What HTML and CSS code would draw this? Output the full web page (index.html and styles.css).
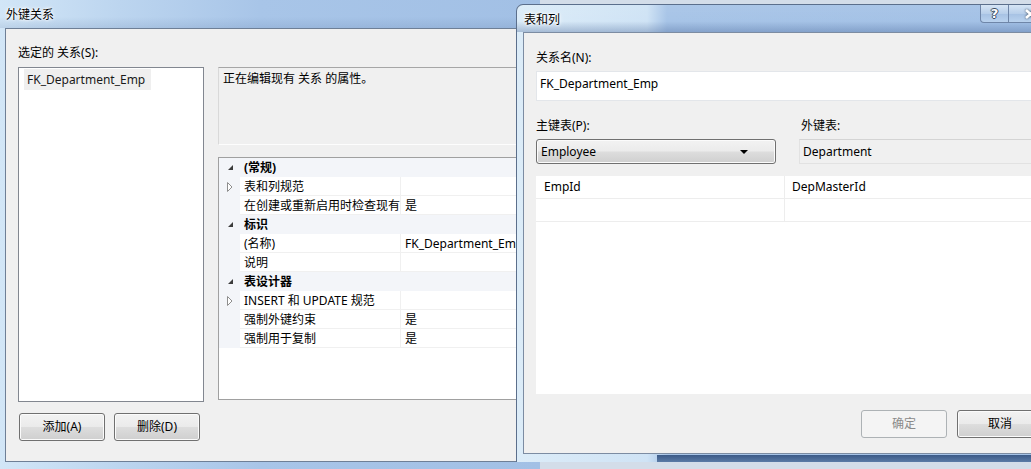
FILE: index.html
```html
<!DOCTYPE html>
<html lang="zh-CN">
<head>
<meta charset="utf-8">
<title>外键关系</title>
<link rel="stylesheet" href="styles.css">
</head>
<body>
<div class="desktop">
  <section class="win win-main">
    <div class="titlebar"><span class="title">外键关系</span></div>
    <div class="client main-client">
      <div class="col-left">
        <div class="label">选定的 关系(S):</div>
        <div class="listbox"><span class="list-item">FK_Department_Emp</span></div>
        <div class="btn-row">
          <button class="btn">添加(A)</button>
          <button class="btn">删除(D)</button>
        </div>
      </div>
      <div class="col-right">
        <div class="desc">正在编辑现有 关系 的属性。</div>
        <div class="propgrid">
          <div class="prow cat"><span class="gut"><svg class="tri-open" width="5" height="5" viewBox="0 0 5 5"><polygon points="5,0 5,5 0,5"/></svg></span><span class="pname">(常规)</span></div>
          <div class="prow"><span class="gut"><svg class="tri-closed" width="6" height="10" viewBox="0 0 6 10"><polygon points="0.5,0.5 5,5 0.5,9.5"/></svg></span><span class="pname">表和列规范</span><span class="pval"></span></div>
          <div class="prow"><span class="gut"></span><span class="pname">在创建或重新启用时检查现有</span><span class="pval">是</span></div>
          <div class="prow cat"><span class="gut"><svg class="tri-open" width="5" height="5" viewBox="0 0 5 5"><polygon points="5,0 5,5 0,5"/></svg></span><span class="pname">标识</span></div>
          <div class="prow"><span class="gut"></span><span class="pname">(名称)</span><span class="pval">FK_Department_Emp</span></div>
          <div class="prow"><span class="gut"></span><span class="pname">说明</span><span class="pval"></span></div>
          <div class="prow cat"><span class="gut"><svg class="tri-open" width="5" height="5" viewBox="0 0 5 5"><polygon points="5,0 5,5 0,5"/></svg></span><span class="pname">表设计器</span></div>
          <div class="prow"><span class="gut"><svg class="tri-closed" width="6" height="10" viewBox="0 0 6 10"><polygon points="0.5,0.5 5,5 0.5,9.5"/></svg></span><span class="pname">INSERT 和 UPDATE 规范</span><span class="pval"></span></div>
          <div class="prow"><span class="gut"></span><span class="pname">强制外键约束</span><span class="pval">是</span></div>
          <div class="prow"><span class="gut"></span><span class="pname">强制用于复制</span><span class="pval">是</span></div>
        </div>
      </div>
    </div>
  </section>

  <section class="win win-cols">
    <div class="titlebar">
      <span class="title">表和列</span>
      <div class="caption-btns">
        <span class="cap-btn cap-help">?</span>
        <span class="cap-btn cap-close"><svg width="11" height="10" viewBox="0 0 11 10"><path d="M1 1 L10 9 M10 1 L1 9"/></svg></span>
      </div>
    </div>
    <div class="client cols-client">
      <div class="label">关系名(N):</div>
      <div class="textbox">FK_Department_Emp</div>
      <div class="tables">
        <div class="tcol tcol-pk">
          <div class="label">主键表(P):</div>
          <div class="combo"><span>Employee</span><svg class="combo-arrow" width="8" height="4" viewBox="0 0 8 4"><polygon points="0,0 8,0 4,4"/></svg></div>
        </div>
        <div class="tcol tcol-fk">
          <div class="label label-fk">外键表:</div>
          <div class="readonly">Department</div>
        </div>
      </div>
      <div class="colgrid">
        <div class="crow"><span class="ccell c1">EmpId</span><span class="ccell c2">DepMasterId</span></div>
        <div class="crow"><span class="ccell c1"></span><span class="ccell c2"></span></div>
      </div>
      <div class="dlg-btns">
        <button class="btn btn-disabled">确定</button>
        <button class="btn">取消</button>
      </div>
    </div>
  </section>
</div>
</body>
</html>
```

FILE: styles.css
```css
* { box-sizing: border-box; }

html, body {
  margin: 0;
  padding: 0;
}

body {
  width: 1031px;
  height: 469px;
  overflow: hidden;
  background: #d3dde9;
  font-family: "Noto Sans", "Noto Sans CJK SC", sans-serif;
  font-size: 12px;
  color: #000;
}

.desktop {
  position: relative;
  width: 1031px;
  height: 469px;
  overflow: hidden;
}

.win {
  position: absolute;
  display: flex;
  flex-direction: column;
}

/* ---------- main window ---------- */
.win-main {
  left: 0;
  top: 0;
  width: 540px;
  height: 469px;
  padding: 0 0 7px 5px;
  background:
    linear-gradient(90deg, #d2e6f7 0px, #bcd5ef 120px, #a8c5e8 260px, #a2c0e5 540px);
}

.titlebar {
  display: flex;
  align-items: flex-start;
  height: 28px;
  flex: none;
}

.title {
  line-height: 16px;
  text-shadow: 0 0 5px #fff, 0 0 3px #fff, 0 0 2px #fff;
}

.win-main .titlebar {
  padding: 7px 0 0 6px;
  margin-left: -5px;
  background: linear-gradient(180deg, rgba(255,255,255,0) 60%, rgba(90,120,165,0.18) 100%);
}

.client {
  flex: 1;
  background: #f0f0f0;
  border: 1px solid #6e7f96;
}

.main-client {
  display: flex;
  gap: 14px;
  padding: 15px 0 0 12px;
}

.col-left {
  width: 186px;
  display: flex;
  flex-direction: column;
  flex: none;
}

.label {
  line-height: 16px;
  height: 16px;
  margin-bottom: 7px;
  padding-top: 1px;
  white-space: nowrap;
}

.listbox {
  height: 335px;
  background: #fff;
  border: 1px solid #828790;
  padding: 1px 0 0 5px;
}

.list-item {
  display: inline-block;
  height: 21px;
  line-height: 21px;
  padding: 0 6px 0 3px;
  background: #efefef;
  color: #1a1a1a;
}

.btn-row {
  display: flex;
  gap: 9px;
  margin-top: 11px;
  padding-left: 1px;
}

.btn {
  width: 86px;
  height: 28px;
  font: inherit;
  color: #000;
  border: 1px solid #707070;
  border-radius: 3px;
  background: linear-gradient(180deg, #f2f2f2 0%, #ebebeb 48%, #dddddd 52%, #cfcfcf 100%);
  box-shadow: inset 0 0 0 1px #fbfbfb;
  padding: 0;
  line-height: 26px;
  text-align: center;
}

.btn-disabled {
  color: #8a8a8a;
  border-color: #adb2b5;
  background: #f4f4f4;
  box-shadow: none;
}

.col-right {
  width: 320px;
  flex: none;
  display: flex;
  flex-direction: column;
  padding-top: 23px;
}

.desc {
  height: 78px;
  background: #f0f0f0;
  border: 1px solid #fdfdfd;
  border-top-color: #a6a6a6;
  border-left-color: #d9d9d9;
  padding: 3px 4px;
  line-height: 16px;
}

.propgrid {
  margin-top: 12px;
  height: 243px;
  background: #fff;
  border: 1px solid #a0a0a0;
  overflow: hidden;
}

.prow {
  display: grid;
  grid-template-columns: 21px 161px 1fr;
  height: 19px;
  line-height: 18px;
  white-space: nowrap;
}

.prow.cat {
  grid-template-columns: 21px 1fr;
  background: #f3f5f9;
  font-weight: bold;
}

.gut {
  background: #f3f5f9;
  display: flex;
  align-items: center;
  padding-left: 9px;
}

.pname, .pval {
  padding: 2px 0 0 4px;
  line-height: 16px;
  border-bottom: 1px solid #f0f0f0;
}

.prow:not(.cat) .pname {
  border-right: 1px solid #f0f0f0;
}

.prow.cat .pname {
  border-bottom: none;
}

.tri-open polygon {
  fill: #3c3c3c;
}

.tri-closed {
  margin-left: -1px;
}

.tri-closed polygon {
  fill: #fff;
  stroke: #8e8e8e;
  stroke-width: 1;
}

/* ---------- columns dialog ---------- */
.win-cols {
  left: 516px;
  top: 4px;
  width: 541px;
  height: 458px;
  padding: 0 0 8px 6px;
  border-radius: 7px 7px 0 0;
  border: 1px solid #5b6f8c;
  border-bottom: none;
  background:
    linear-gradient(90deg, #dcecf8 0px, #cfe3f5 130px, #a7c4e7 150px, #a3c1e6 541px);
}

.win-cols::after {
  content: "";
  position: absolute;
  left: 140px;
  right: 0;
  bottom: 0;
  height: 7px;
  background: linear-gradient(180deg, #3b5a87, #5a7aa6);
}

.win-cols .titlebar {
  height: 27px;
  padding: 7px 0 0 7px;
  margin-left: -6px;
  background: linear-gradient(180deg, rgba(255,255,255,0.05) 0%, rgba(255,255,255,0) 60%, rgba(70,100,150,0.35) 100%);
}

.caption-btns {
  margin-left: auto;
  margin-top: -7px;
  margin-right: 4px;
  display: flex;
}

.cap-btn {
  height: 18px;
  display: flex;
  align-items: center;
  justify-content: center;
  border: 1px solid #6f86a8;
  border-top: none;
  background: linear-gradient(180deg, #d6e5f5, #b8cfea 50%, #a6c1e3 51%, #b9d2ee);
}

.cap-help {
  width: 29px;
  border-radius: 0 0 0 4px;
  font-family: "DejaVu Sans", sans-serif;
  font-weight: bold;
  font-size: 13px;
  color: #fff;
  text-shadow: 1px 0 #3a4a60, -1px 0 #3a4a60, 0 1px #3a4a60, 0 -1px #3a4a60;
}

.cap-close {
  width: 43px;
  border-left: none;
  border-radius: 0 0 4px 0;
}

.cap-close path {
  stroke: #fff;
  stroke-width: 2.6;
  fill: none;
}

.cap-close svg {
  filter: drop-shadow(0 0 1px #34445a);
}

.cols-client {
  display: flex;
  flex-direction: column;
  padding: 16px 12px 0 12px;
  border-color: #7c8ca2;
}

.cols-client .label {
  margin-bottom: 6px;
}

.textbox {
  height: 30px;
  background: #fff;
  border: 1px solid #e3e6ea;
  padding: 4px 3px 0;
  line-height: 16px;
}

.tables {
  display: flex;
  gap: 23px;
  margin-top: 16px;
}

.tcol-pk {
  width: 240px;
  flex: none;
}

.tcol-fk {
  flex: 1;
}

.label-fk {
  padding-left: 2px;
}

.combo {
  height: 25px;
  display: flex;
  align-items: center;
  padding: 0 0 0 4px;
  border: 1px solid #707070;
  border-radius: 3px;
  background: linear-gradient(180deg, #f2f2f2 0%, #ebebeb 48%, #dddddd 52%, #cfcfcf 100%);
  box-shadow: inset 0 0 0 1px #fbfbfb;
}

.combo-arrow {
  margin-left: auto;
  margin-right: 27px;
}

.combo-arrow polygon {
  fill: #000;
}

.readonly {
  height: 25px;
  display: flex;
  align-items: center;
  padding-left: 3px;
  background: #f0f0f0;
  border: 1px solid #e2e2e2;
  border-top-color: #d4d4d4;
}

.colgrid {
  margin-top: 12px;
  height: 218px;
  background: #fff;
}

.crow {
  display: grid;
  grid-template-columns: 249px 1fr;
  height: 23px;
}

.ccell {
  line-height: 22px;
  border-bottom: 1px solid #ededed;
}

.c1 {
  padding-left: 8px;
  border-right: 1px solid #ededed;
}

.c2 {
  padding-left: 7px;
}

.dlg-btns {
  display: flex;
  justify-content: flex-end;
  gap: 10px;
  margin-top: 16px;
}
```
